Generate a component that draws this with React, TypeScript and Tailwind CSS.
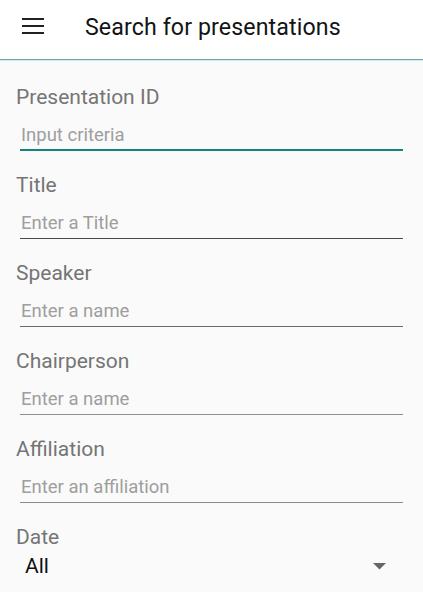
import React from "react";

interface Field {
  label: string;
  placeholder: string;
  line: string;
  focused?: boolean;
}

const fields: Field[] = [
  { label: "Presentation ID", placeholder: "Input criteria", line: "border-[#12867a]", focused: true },
  { label: "Title", placeholder: "Enter a Title", line: "border-[#4a4a4a]" },
  { label: "Speaker", placeholder: "Enter a name", line: "border-[#6a6a6a]" },
  { label: "Chairperson", placeholder: "Enter a name", line: "border-[#8e8e8e]" },
  { label: "Affiliation", placeholder: "Enter an affiliation", line: "border-[#8a8a8a]" },
];

function SearchField({ field }: { field: Field }) {
  return (
    <div className="flex flex-col mb-[20px]">
      <div className="h-[28px] leading-[28px] text-[21px] text-[#757575] pl-[16px]">{field.label}</div>
      <div
        className={`ml-[20px] w-[383px] pl-[1px] pt-[13px] ${
          field.focused ? "pb-[3px] border-b-2" : "pb-[4px] border-b"
        } ${field.line}`}
      >
        <div className="h-[22px] leading-[22px] text-[18.5px] text-[#9e9e9e]">{field.placeholder}</div>
      </div>
    </div>
  );
}

export default function App() {
  return (
    <div
      className="w-[423px] h-[592px] overflow-hidden bg-[#fafafa] flex flex-col"
      style={{ fontFamily: "Roboto, 'Noto Sans', sans-serif" }}
    >
      {/* App bar */}
      <div className="h-[60px] bg-white border-b border-[#6aa6b0] shadow-[0_1px_0_#d4e7ea] flex items-start shrink-0">
        <div className="ml-[22px] mt-[18px] w-[22px] flex flex-col gap-[5px]">
          <div className="h-[2px] bg-[#212121]" />
          <div className="h-[2px] bg-[#212121]" />
          <div className="h-[2px] bg-[#212121]" />
        </div>
        <div className="ml-[41px] mt-[13px] h-[28px] leading-[28px] text-[23.2px] text-[#141414] tracking-[0.1px]">
          Search for presentations
        </div>
      </div>

      {/* Form */}
      <div className="flex flex-col pt-[23px]">
        {fields.map((f) => (
          <SearchField key={f.label} field={f} />
        ))}
        <div className="flex flex-col">
          <div className="h-[28px] leading-[28px] text-[21px] text-[#757575] pl-[16px]">Date</div>
          <div className="ml-[20px] w-[383px] mt-[1px] pl-[5px] pr-[17px] flex items-center justify-between">
            <span className="h-[28px] leading-[28px] text-[21px] text-[#111]">All</span>
            <svg width="13" height="7" viewBox="0 0 13 7">
              <path d="M0 0 L13 0 L6.5 6.5 Z" fill="#666" />
            </svg>
          </div>
        </div>
      </div>
    </div>
  );
}
